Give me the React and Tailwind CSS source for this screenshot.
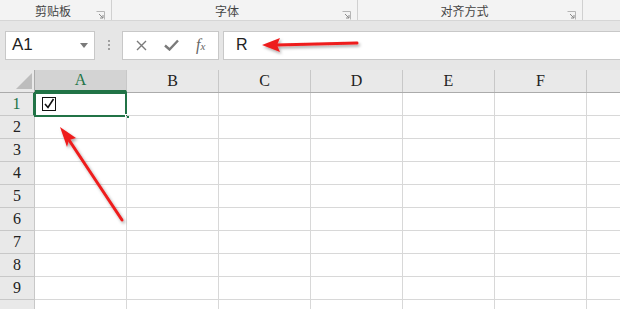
import React from 'react';

const cols = ['A', 'B', 'C', 'D', 'E', 'F', ''];
const rows = [1, 2, 3, 4, 5, 6, 7, 8, 9, 10];

const Launcher = () => (
  <svg width="9" height="9" viewBox="0 0 9 9" className="shrink-0 mt-[6px]">
    <path d="M0.5 0.5h8v8" fill="none" stroke="#b5b5b5" />
    <path d="M3 3l4 4M4 7h3V4" fill="none" stroke="#8a8a8a" />
  </svg>
);

export default function App() {
  return (
    <div className="relative w-[620px] h-[309px] overflow-hidden bg-white" style={{ fontFamily: '"Liberation Sans", "Noto Sans CJK SC", sans-serif' }}>
      {/* Ribbon group labels */}
      <div className="flex h-[21px] bg-[#f3f3f3] border-b border-[#d6d6d6] text-[12px] text-[#444]">
        <div className="w-[112px] flex items-center border-r border-[#d0d0d0] pr-[6px] pt-[4px]">
          <span className="flex-1 text-center pl-[10px]">剪贴板</span>
          <Launcher />
        </div>
        <div className="w-[246px] flex items-center border-r border-[#d0d0d0] pr-[6px] pt-[4px]">
          <span className="flex-1 text-center">字体</span>
          <Launcher />
        </div>
        <div className="w-[225px] flex items-center border-r border-[#d0d0d0] pr-[6px] pt-[4px]">
          <span className="flex-1 text-center pl-[4px]">对齐方式</span>
          <Launcher />
        </div>
        <div className="flex-1" />
      </div>

      {/* Formula bar */}
      <div className="flex items-center h-[49px] bg-[#e6e6e6] pl-[5px] pb-[1px]">
        <div className="w-[90px] h-[29px] bg-white border border-[#c8c8c8] flex items-center pl-[6px] pr-[6px]">
          <span className="flex-1 text-[17px] text-[#222]">A1</span>
          <svg width="8" height="5" viewBox="0 0 8 5"><path d="M0 0h8L4 5z" fill="#7a7a7a" /></svg>
        </div>
        <div className="w-[27px] flex flex-col items-center gap-[2px]">
          <span className="w-[2px] h-[2px] bg-[#a0a0a0]" />
          <span className="w-[2px] h-[2px] bg-[#a0a0a0]" />
          <span className="w-[2px] h-[2px] bg-[#a0a0a0]" />
        </div>
        <div className="w-[97px] h-[29px] bg-white border border-[#c8c8c8] flex items-center justify-around px-[4px]">
          <svg width="11" height="11" viewBox="0 0 11 11"><path d="M1 1l9 9M10 1l-9 9" stroke="#7a7a7a" strokeWidth="1.4" /></svg>
          <svg width="15" height="12" viewBox="0 0 15 12"><path d="M1 6.5l4.5 4L14 1.5" fill="none" stroke="#7a7a7a" strokeWidth="2.4" /></svg>
          <span className="text-[16px] italic text-[#666] leading-none" style={{ fontFamily: '"Liberation Serif", serif' }}>f<span className="text-[11px]">x</span></span>
        </div>
        <div className="ml-[4px] flex-1 h-[29px] bg-white border border-[#c8c8c8] border-r-0 flex items-center pl-[12px] text-[16px] text-[#222]">
          R
        </div>
      </div>

      {/* Grid */}
      <div className="text-[16px] text-[#222]" style={{ fontFamily: '"Liberation Serif", serif' }}>
        <div className="flex h-[23px] bg-[#e9e9e9] border-b border-[#ababab]">
          <div className="w-[35px] shrink-0 flex items-end justify-end pr-[2px] pb-[3px] border-r border-[#ababab]">
            <svg width="16" height="16" viewBox="0 0 16 16"><path d="M16 0v16H0z" fill="#bdbdbd" /></svg>
          </div>
          {cols.map((c, i) => (
            <div
              key={i}
              className={`w-[92px] shrink-0 flex items-center justify-center border-r border-[#c8c8c8] ${c === 'A' ? 'bg-[#d3d3d3] text-[#217346] border-b-2 border-b-[#217346]' : ''}`}
            >
              {c}
            </div>
          ))}
        </div>
        {rows.map((r) => (
          <div key={r} className="flex h-[23px]">
            <div className={`w-[35px] shrink-0 flex items-center justify-center bg-[#e9e9e9] border-r border-b border-[#c8c8c8] ${r === 1 ? 'bg-[#d3d3d3] text-[#217346] border-r-2 border-r-[#217346]' : ''}`}>
              {r < 10 ? r : ''}
            </div>
            {cols.map((c, i) => (
              <div key={i} className="relative w-[92px] shrink-0 border-r border-b border-[#d8d8d8]">
                {r === 1 && i === 0 && (
                  <>
                    <div className="absolute -left-[1px] -top-[1px] w-[93px] h-[25px] border-2 border-[#217346]" />
                    <div className="absolute -right-[4px] -bottom-[4px] w-[5px] h-[5px] bg-[#217346] border border-white" />
                    <svg className="absolute left-[7px] top-[4px]" width="14" height="14" viewBox="0 0 14 14">
                      <rect x="0.5" y="0.5" width="13" height="13" fill="none" stroke="#111" />
                      <path d="M3 7l3 3.5L11.5 2" fill="none" stroke="#111" strokeWidth="1.6" />
                    </svg>
                  </>
                )}
              </div>
            ))}
          </div>
        ))}
      </div>

      {/* Annotation arrows */}
      <svg className="absolute left-0 top-0 pointer-events-none" width="620" height="309">
        <defs>
          <filter id="sh" x="-20%" y="-20%" width="140%" height="140%">
            <feDropShadow dx="1.5" dy="2" stdDeviation="1.5" floodColor="#000" floodOpacity="0.35" />
          </filter>
        </defs>
        <g filter="url(#sh)" fill="#ee1c1c" stroke="#ee1c1c">
          <path d="M357 43L276 45" strokeWidth="3" fill="none" strokeLinecap="round" />
          <path d="M262 45L280 38L277 45L280 52z" stroke="none" />
          <path d="M122 220L69 140" strokeWidth="3" fill="none" strokeLinecap="round" />
          <path d="M60 127L76 138L69 140L67 147z" stroke="none" />
        </g>
      </svg>
    </div>
  );
}
